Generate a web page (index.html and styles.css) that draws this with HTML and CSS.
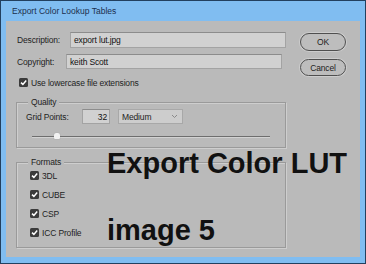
FILE: index.html
```html
<!DOCTYPE html>
<html lang="en">
<head>
  <meta charset="UTF-8" />
  <title>Export Color Lookup Tables</title>
  <link rel="stylesheet" href="styles.css">
</head>
<body>
  <div class="window">
    <div class="titlebar">Export Color Lookup Tables</div>

    <div class="dialog">
      <div class="main">
        <!-- text fields -->
        <div class="row">
          <span class="label">Description:</span>
          <span class="input">export lut.jpg</span>
        </div>
        <div class="row row-copy">
          <span class="label">Copyright:</span>
          <span class="input">keith Scott</span>
        </div>

        <div class="check check-top">
          <svg class="box" width="9" height="9" viewBox="0 0 9 9"><rect width="9" height="9" rx="1.5" fill="#3b3b3b"/><polyline points="2,4.6 3.9,6.4 7.2,2.6" fill="none" stroke="#fff" stroke-width="1.5"/></svg>
          <span>Use lowercase file extensions</span>
        </div>

        <!-- quality -->
        <div class="group group-quality">
          <span class="group-title">Quality</span>
          <div class="grid-row">
            <span class="grid-label">Grid Points:</span>
            <span class="input num">32</span>
            <span class="select">Medium
              <svg class="arrow" width="7" height="5" viewBox="0 0 7 5"><polyline points="1,1 3.5,3.5 6,1" fill="none" stroke="#8a8a8a" stroke-width="1"/></svg>
            </span>
          </div>
          <div class="slider">
            <span class="thumb"></span>
          </div>
        </div>

        <!-- formats -->
        <div class="group group-formats">
          <span class="group-title">Formats</span>
          <div class="check">
            <svg class="box" width="9" height="9" viewBox="0 0 9 9"><rect width="9" height="9" rx="1.5" fill="#3b3b3b"/><polyline points="2,4.6 3.9,6.4 7.2,2.6" fill="none" stroke="#fff" stroke-width="1.5"/></svg>
            <span>3DL</span>
          </div>
          <div class="check">
            <svg class="box" width="9" height="9" viewBox="0 0 9 9"><rect width="9" height="9" rx="1.5" fill="#3b3b3b"/><polyline points="2,4.6 3.9,6.4 7.2,2.6" fill="none" stroke="#fff" stroke-width="1.5"/></svg>
            <span>CUBE</span>
          </div>
          <div class="check">
            <svg class="box" width="9" height="9" viewBox="0 0 9 9"><rect width="9" height="9" rx="1.5" fill="#3b3b3b"/><polyline points="2,4.6 3.9,6.4 7.2,2.6" fill="none" stroke="#fff" stroke-width="1.5"/></svg>
            <span>CSP</span>
          </div>
          <div class="check">
            <svg class="box" width="9" height="9" viewBox="0 0 9 9"><rect width="9" height="9" rx="1.5" fill="#3b3b3b"/><polyline points="2,4.6 3.9,6.4 7.2,2.6" fill="none" stroke="#fff" stroke-width="1.5"/></svg>
            <span>ICC Profile</span>
          </div>
        </div>
      </div>

      <div class="side">
        <button class="btn btn-ok">OK</button>
        <button class="btn btn-cancel">Cancel</button>
      </div>
    </div>

    <!-- caption over the dialog -->
    <div class="caption caption-1">Export Color LUT</div>
    <div class="caption caption-2">image 5</div>
  </div>
</body>
</html>
```

FILE: styles.css
```css
body {
  margin: 0;
  font-family: "Liberation Sans", Arial, sans-serif;
}
.window {
  position: relative;
  width: 366px;
  height: 264px;
  box-sizing: border-box;
  border: 1px solid #22405f;
  background-color: #80bdf1;
  padding: 0 5px 5px 5px;
}
.titlebar {
  height: 20px;
  line-height: 20px;
  padding-left: 6px;
  font-size: 8.5px;
  color: #1b2f4d;
}
.dialog {
  display: flex;
  height: 236px;
  padding: 11px 0 0 10px;
  box-sizing: border-box;
  background-color: #bababa;
  font-size: 8.5px;
  letter-spacing: -0.15px;
  color: #1e1e1e;
}
.main {
  width: 270px;
}
.side {
  display: flex;
  flex-direction: column;
  margin-left: 14px;
  padding-top: 1px;
}
.row {
  display: flex;
  align-items: center;
  height: 16px;
}
.label {
  width: 53px;
  padding-left: 1px;
}
.input {
  display: flex;
  align-items: center;
  width: 216px;
  height: 100%;
  box-sizing: border-box;
  padding-left: 3px;
  background-color: #d1d1d1;
  border: 1px solid #a3a3a3;
  border-top-color: #8c8c8c;
  color: #111;
}
.row-copy {
  margin-top: 6px;
  height: 15px;
}
.row-copy .label {
  width: 49px;
}
.check {
  display: flex;
  align-items: center;
  gap: 3px;
  height: 9px;
}
.check-top {
  margin-top: 9px;
  padding-left: 3px;
}
.box {
  display: block;
  flex: none;
}
.group {
  position: relative;
  box-sizing: border-box;
  border: 1px solid #9a9a9a;
  box-shadow: 1px 1px 0 #cecece, inset 1px 1px 0 #cecece;
}
.group-title {
  position: absolute;
  top: -6px;
  left: 11px;
  padding: 0 3px;
  line-height: 11px;
  background-color: #bababa;
}
.group-quality {
  height: 46px;
  margin-top: 15px;
  padding: 6px 0 0 9px;
}
.grid-row {
  display: flex;
  align-items: center;
  height: 15px;
}
.grid-label {
  width: 56px;
}
.num {
  width: 28px;
  justify-content: flex-end;
  padding-right: 2px;
}
.select {
  position: relative;
  display: flex;
  align-items: center;
  width: 65px;
  height: 15px;
  margin-left: 8px;
  box-sizing: border-box;
  padding-left: 3px;
  background-color: #cdcdcd;
  border: 1px solid #a8a8a8;
}
.arrow {
  position: absolute;
  right: 4px;
  top: 4px;
}
.slider {
  position: relative;
  width: 238px;
  height: 10px;
  margin: 8px 0 0 6px;
}
.slider::before {
  content: "";
  position: absolute;
  left: 0;
  right: 0;
  top: 4px;
  height: 1px;
  background-color: #6e6e6e;
  box-shadow: 0 1px 0 #d2d2d2;
}
.thumb {
  position: absolute;
  left: 22px;
  top: 1px;
  width: 6px;
  height: 6px;
  border-radius: 2px 2px 1px 1px;
  background-color: #f2f2f2;
  box-shadow: 0 0 1px #8a8a8a;
}
.group-formats {
  display: flex;
  flex-direction: column;
  gap: 10px;
  height: 86px;
  margin-top: 14px;
  padding: 8px 0 0 13px;
}
.btn {
  width: 46px;
  padding: 0;
  border: 1px solid #4f4f4f;
  border-radius: 9px;
  background-color: #bdbdbd;
  box-shadow: 0 0 0 1px #cdcdcd;
  font-family: "Liberation Sans", Arial, sans-serif;
  font-size: 8.5px;
  letter-spacing: -0.15px;
  color: #1e1e1e;
}
.btn-ok {
  height: 18px;
}
.btn-cancel {
  height: 17px;
  margin-top: 8px;
}
.caption {
  position: absolute;
  left: 106px;
  font-size: 29px;
  line-height: 29px;
  font-weight: bold;
  color: #111;
  white-space: nowrap;
}
.caption-1 {
  top: 148px;
}
.caption-2 {
  top: 215px;
}
```
